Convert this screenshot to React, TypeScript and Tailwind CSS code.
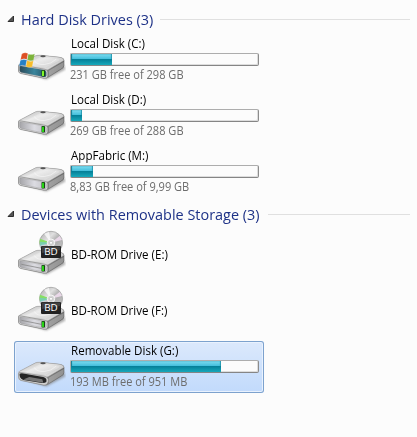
import React from "react";

type Kind = "system" | "disk" | "bd" | "removable";

function DriveIcon({ kind }: { kind: Kind }) {
  return (
    <svg viewBox="0 0 52 52" className="h-[52px] w-[52px] shrink-0">
      <defs>
        <linearGradient id={`${kind}-top`} x1="0" y1="0" x2="1" y2="1">
          <stop offset="0" stopColor="#b5b5b5" />
          <stop offset=".4" stopColor="#e6e6e6" />
          <stop offset=".65" stopColor="#cfcfcf" />
          <stop offset="1" stopColor="#f0f0f0" />
        </linearGradient>
        <linearGradient id={`${kind}-side`} x1="0" y1="0" x2="1" y2="0">
          <stop offset="0" stopColor="#b4b4b4" />
          <stop offset=".5" stopColor="#8c8c8c" />
          <stop offset="1" stopColor="#666" />
        </linearGradient>
        <linearGradient id={`${kind}-front`} x1="0" y1="0" x2="1" y2="0">
          <stop offset="0" stopColor={kind === "system" ? "#2b4a59" : "#a4a4a8"} />
          <stop offset=".55" stopColor={kind === "system" ? "#39859c" : "#dcdce2"} />
          <stop offset="1" stopColor={kind === "system" ? "#255366" : "#c2c2c6"} />
        </linearGradient>
        <linearGradient id={`${kind}-disc`} x1="0" y1="0" x2="1" y2="1">
          <stop offset="0" stopColor="#a8a8a8" />
          <stop offset=".35" stopColor="#e0e0e0" />
          <stop offset=".55" stopColor="#acacac" />
          <stop offset="1" stopColor="#cecece" />
        </linearGradient>
        <filter id={`${kind}-blur`} x="-20%" y="-50%" width="140%" height="200%">
          <feGaussianBlur stdDeviation="1" />
        </filter>
      </defs>
      <g transform="translate(.3 -.5)">
        <path d="M6 38 L32 46 L51 36 L50 32Z" fill="#777" opacity=".6" filter={`url(#${kind}-blur)`} />
        <path d="M4 32 Q4 30.8 6 30 L21 22.3 Q23 21.4 26 21.5 L45 23.5 Q50 24.3 50 27 L50 32 Q50 34 48 35.3 L34 44 Q32 45.2 29 44.7 L6 40 Q4 39.4 4 37.5Z" fill={`url(#${kind}-side)`} />
        <path d="M4.5 31.3 L21 22.5 Q23 21.5 26 21.7 L45 23.7 Q50 24.5 49.5 27 L34 36 Q32.3 37 30 36.7 L7 33 Q4.5 32.5 4.5 31.3Z" fill={`url(#${kind}-top)`} stroke="#999" strokeWidth=".4" />
        <path d="M10.5 31.6 L26 23.7 L43.5 25.5 Q46.7 26 43.6 27.7 L31 34.2Z" fill="#fff" opacity=".25" />
        <path d="M20 27 Q22 31.3 30 31 Q37 30.5 42 25.6" fill="none" stroke="#fff" strokeWidth=".8" opacity=".6" />
        {kind !== "bd" && <ellipse cx="28.7" cy="22.8" rx="2.7" ry="1" fill="#555" />}
        <path d="M34.5 37.2 L49.3 28.4 L49.3 31.7 Q49.3 33.6 47.4 34.8 L34.5 42.7Z" fill="#d2d2d2" opacity=".4" />
        {kind === "removable" ? (
          <>
            <path d="M4.2 33 Q4.5 31.8 7 32 L30 35.7 Q35 37 34 41 Q33 45 29 44.6 L7 40 Q4 39 4.2 33Z" fill="#cfcfcf" stroke="#777" strokeWidth=".5" />
            <path d="M5.2 33.2 Q7 32.6 9 33 L29 36.5 Q33 37.4 32 41.4 Q30.5 42.8 27.5 42.4 L9 39.4 Q5 38 5.2 33.2Z" fill="#252525" />
            <path d="M9 39 L15 36.4 L28 38.8 L29 42.3Z" fill="#777" />
          </>
        ) : (
          <>
            <path d="M4.2 32.4 Q4.2 31.1 6 31.3 L31 35.9 Q33.5 36.4 33.5 38.4 L33.5 42.5 Q33.3 45.2 30 44.7 L6.5 40 Q4.3 39.3 4.2 37.5Z" fill="#dedede" stroke="#777" strokeWidth=".6" />
            <path d="M5.3 33 Q5.3 32 7 32.4 L29.8 36.5 Q32 37.1 32 38.7 L32 42.2 Q31.8 43.9 29.5 43.5 L7 38.9 Q5.3 38.4 5.3 37Z" fill={`url(#${kind}-front)`} stroke="#808080" strokeWidth=".3" />
            {kind === "bd" && <path d="M7 35.8 L27 39.8" stroke="#888" strokeWidth=".8" />}
            <rect x="27.2" y="36.5" width="3.5" height="6.5" rx=".8" fill="#174415" />
            <rect x="27.7" y="37.2" width="2" height="5.3" rx=".5" fill={kind === "system" ? "#80f729" : "#28d514"} />
          </>
        )}
      </g>
      {kind === "system" && (
        <g stroke="#fff" strokeWidth=".15">
          <path d="M7.8 20.1 Q10.8 17.9 13.9 19.5 L12.8 25.4 Q9.7 24.1 6.5 25.9Z" fill="#dd4f24" />
          <path d="M14.4 19.9 Q17.4 21.3 20.7 19.7 L19.5 26.2 Q16.3 27.6 13.3 25.8Z" fill="#7db33b" />
          <path d="M6.3 26.4 Q9.6 24.8 12.7 26.1 L11.6 31.9 Q8.5 30.5 5.2 32.2Z" fill="#2580c6" />
          <path d="M13.1 26.5 Q16.3 28.1 19.3 26.8 L18.2 32.7 Q15.1 34 12 32.4Z" fill="#f7bd2c" />
        </g>
      )}
      {kind === "bd" && (
        <>
          <circle cx="37" cy="13.8" r="11.5" fill={`url(#${kind}-disc)`} stroke="#989898" strokeWidth=".7" />
          <path d="M37 13.8 L26 9.8 Q25 13 26 16Z" fill="#86df63" />
          <path d="M37 13.8 L26.2 12.7 Q25.6 15 26.2 17Z" fill="#73c7cc" opacity=".7" />
          <path d="M37 13.8 L45.8 6.8 L48 11Z" fill="#e9d8e8" />
          <path d="M37 13.8 L30 4.8 L35 2.8Z" fill="#fff" opacity=".7" />
          <circle cx="37" cy="13.8" r="3.8" fill="#d6d6d6" stroke="#fff" strokeWidth=".8" />
          <circle cx="37" cy="13.8" r="1.5" fill="#fff" stroke="#aaa" strokeWidth=".5" />
          <rect x="27" y="17" width="20" height="12" rx="1" fill="#222" />
          <path d="M28 17.5 H46 V21 L28 24Z" fill="#555" opacity=".6" />
          <text x="37" y="26" textAnchor="middle" textLength="13.5" lengthAdjust="spacingAndGlyphs" fill="#fff" className="font-['Open_Sans',sans-serif] text-[9.5px] font-medium">BD</text>
        </>
      )}
    </svg>
  );
}

function GroupHeader({ title, width, height }: { title: string; width: string; height: string }) {
  return (
    <div className={`flex ${height} items-center pr-[7px] pl-[7px]`}>
      <svg viewBox="0 0 8 8" className="mr-[6px] h-2 w-2 shrink-0">
        <path d="M6.5 1 V6.5 H1Z" fill="#555" stroke="#222" strokeWidth=".9" />
      </svg>
      <h2 className={`${width} mr-[7px] shrink-0 whitespace-nowrap`}>
        <span className="inline-block origin-left scale-x-[.963] text-[15px] leading-5 text-[#1e3287]">{title}</span>
      </h2>
      <div className="h-px flex-1 bg-[#e0e0e0]" />
    </div>
  );
}

type DriveProps = { kind: Kind; name: string; free?: string; used?: number; selected?: boolean };

function Drive({ kind, name, free, used = 0, selected }: DriveProps) {
  return (
    <div
      className={`flex h-[52px] w-[250px] rounded-[3px] ${
        selected
          ? "bg-linear-to-b from-[#dce9fc] to-[#c1dafc] shadow-[inset_0_0_0_1px_#7da2ce,inset_0_0_0_2px_#e9f2fe]"
          : ""
      }`}
    >
      <DriveIcon kind={kind} />
      <div className={`ml-1 flex w-[189px] flex-col text-xs ${free ? "pt-px" : "justify-center pb-[2px]"}`}>
        <div className={`${free ? "h-[18px]" : "h-[17px]"} leading-[17px] whitespace-nowrap text-black`}>
          <span className="ml-px inline-block origin-left scale-x-[.965]">{name}</span>
        </div>
        {free && (
          <>
            <div className="h-[13px] rounded-[2px] border border-t-[#adadad] border-r-[#8c8c8c] border-b-[#858585] border-l-[#adadad] bg-[#fcfcfc] shadow-[inset_-1px_-1px_0_#ddd]">
              <div
                className="h-full bg-linear-to-b from-[#7bdcf0] from-0% via-[#41bedb] via-45% to-[#13a3b8] shadow-[inset_1px_0_1px_#167b91,inset_-1px_0_1px_#2599b1]"
                style={{ width: `${used}px` }}
              >
                <div className="flex h-full flex-col justify-end">
                  <div className="h-[6px] bg-linear-to-b from-[#047d96] to-[#17a9bb]" />
                </div>
              </div>
            </div>
            <div className="h-[18px] leading-[18px] whitespace-nowrap text-[#6d6d6d]">
              <span className="inline-block origin-left scale-x-[.92]">{free}</span>
            </div>
          </>
        )}
      </div>
    </div>
  );
}

export default function App() {
  return (
    <main className="h-[437px] w-[417px] overflow-hidden bg-[#fcfcfc] pt-1 font-['Open_Sans','Noto_Sans',sans-serif]">
      <GroupHeader title="Hard Disk Drives (3)" width="w-[132px]" height="h-[30px]" />
      <section className="flex flex-col gap-1 pl-[14px]">
        <Drive kind="system" name="Local Disk (C:)" free="231 GB free of 298 GB" used={41} />
        <Drive kind="disk" name="Local Disk (D:)" free="269 GB free of 288 GB" used={11} />
        <Drive kind="disk" name="AppFabric (M:)" free="8,83 GB free of 9,99 GB" used={22} />
      </section>
      <GroupHeader title="Devices with Removable Storage (3)" width="w-[240px]" height="h-[31px] pt-px" />
      <section className="flex flex-col gap-1 pl-[14px]">
        <Drive kind="bd" name="BD-ROM Drive (E:)" />
        <Drive kind="bd" name="BD-ROM Drive (F:)" />
        <Drive kind="removable" name="Removable Disk (G:)" free="193 MB free of 951 MB" used={150} selected />
      </section>
    </main>
  );
}
